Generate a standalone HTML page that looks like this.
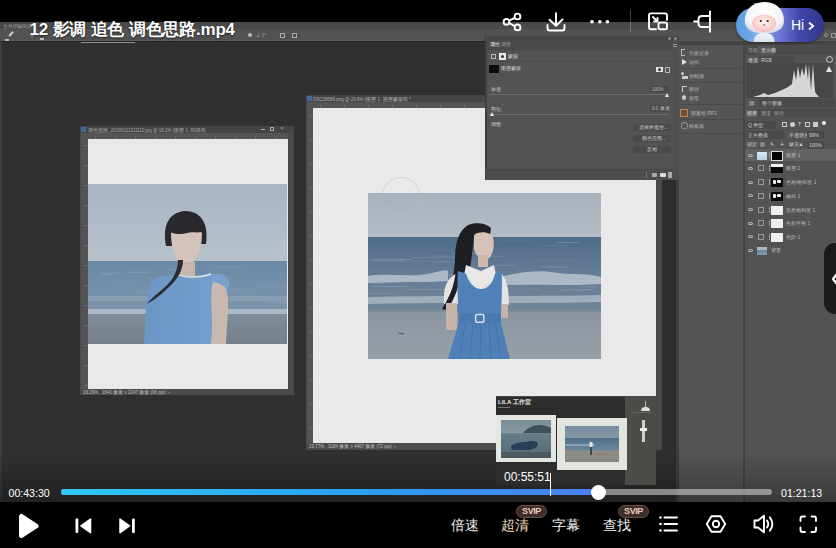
<!DOCTYPE html>
<html><head><meta charset="utf-8">
<style>
*{margin:0;padding:0;box-sizing:border-box}
html,body{width:836px;height:548px;overflow:hidden;background:#303030;font-family:"Liberation Sans",sans-serif;position:relative}
.a{position:absolute}
.t{position:absolute;font-size:5px;line-height:5px;color:#c8c8c8;white-space:nowrap}
.sep{position:absolute;height:1px;background:#474747}
</style></head><body>
<!-- ===== PHOTOSHOP FRAME ===== -->
<!-- menu + options bar -->
<div class="a" style="left:0;top:22px;width:836px;height:7px;background:#494949"></div>
<div class="a" style="left:0;top:29px;width:836px;height:12px;background:#525252"></div>
<div class="a" style="left:0;top:40px;width:836px;height:1px;background:#5a5a5a"></div>
<div class="a" style="left:0;top:41px;width:836px;height:1px;background:#262626"></div>
<div class="a" style="left:0;top:42px;width:2px;height:460px;background:#3c3c3c"></div>

<!-- LEFT DOC WINDOW -->
<div class="a" style="left:80px;top:126px;width:214px;height:269px;background:#4b4b4b"></div>
<div class="a" style="left:80px;top:126px;width:214px;height:7px;background:#444"></div>
<div class="a" style="left:81px;top:127px;width:5px;height:5px;background:#3d6aa0"></div>
<div class="a" style="left:81px;top:133px;width:7px;height:256px;background:#545454"></div>
<div class="a" style="left:88px;top:133px;width:200px;height:6px;background:#545454"></div>
<div class="a" style="left:88px;top:139px;width:200px;height:250px;background:#e9e9ea"></div>

<!-- RIGHT DOC WINDOW -->
<div class="a" style="left:306px;top:95px;width:356px;height:355px;background:#4b4b4b"></div>
<div class="a" style="left:306px;top:95px;width:356px;height:7px;background:#444"></div>
<div class="a" style="left:307px;top:96px;width:5px;height:5px;background:#3d6aa0"></div>
<div class="a" style="left:307px;top:102px;width:6px;height:341px;background:#545454"></div>
<div class="a" style="left:313px;top:102px;width:343px;height:6px;background:#545454"></div>
<div class="a" style="left:313px;top:108px;width:343px;height:335px;background:#e9e9ea"></div>


<!-- PS menu text & option icons -->
<div class="t" style="left:3px;top:24px;color:#9a9a9a;font-size:4.5px">文件(F)</div>
<div class="t" style="left:17px;top:24px;color:#9a9a9a;font-size:4.5px">编辑(E)</div>
<div class="a" style="left:8px;top:33px;width:6px;height:1.5px;background:#cfcfcf;transform:rotate(-50deg)"></div>
<div class="a" style="left:5px;top:39px;width:4px;height:2px;background:#bbb"></div>
<div class="a" style="left:30px;top:33px;width:4px;height:4px;border-radius:50%;background:#8a8a8a"></div>
<div class="a" style="left:40px;top:38px;width:4px;height:2px;background:#bbb"></div>
<div class="a" style="left:248px;top:33px;width:4px;height:4px;border-radius:50%;background:#bbb"></div>
<div class="t" style="left:256px;top:33px;color:#9a9a9a;font-size:5px">∠ 0°</div>
<div class="a" style="left:280px;top:33px;width:5px;height:5px;border:1px solid #aaa"></div>
<div class="a" style="left:292px;top:33px;width:5px;height:5px;border:1px solid #aaa"></div>
<div class="a" style="left:81px;top:42px;width:54px;height:1px;background:#8a8a8a"></div>

<!-- doc window titles -->
<div class="t" style="left:88px;top:127.5px;color:#a8a8a8;font-size:4.5px">调色思路_20190121211110.jpg @ 16.2% (图层 1, RGB/8)</div>
<div class="a" style="left:261px;top:129px;width:4px;height:1px;background:#aaa"></div>
<div class="a" style="left:270px;top:127px;width:4px;height:4px;border:1px solid #aaa"></div>
<div class="t" style="left:280px;top:126px;color:#aaa;font-size:6px">×</div>
<div class="t" style="left:313px;top:97px;color:#b0b0b0;font-size:4.5px">DSC08586.png @ 29.8% (图层 1, 图层蒙版/8) *</div>
<!-- status bars -->
<div class="t" style="left:83px;top:390px;color:#bdbdbd;font-size:4.5px">16.29% &nbsp; 1641 像素 x 2247 像素 (96 ppi) &nbsp;›</div>
<div class="t" style="left:309px;top:444px;color:#bdbdbd;font-size:4.5px">29.77% &nbsp; 3184 像素 x 4467 像素 (72 ppi) &nbsp;›</div>

<div class="a" style="left:320px;top:105px;width:1px;height:3px;background:#707070"></div><div class="a" style="left:344px;top:105px;width:1px;height:3px;background:#707070"></div><div class="a" style="left:368px;top:105px;width:1px;height:3px;background:#707070"></div><div class="a" style="left:392px;top:105px;width:1px;height:3px;background:#707070"></div><div class="a" style="left:416px;top:105px;width:1px;height:3px;background:#707070"></div><div class="a" style="left:440px;top:105px;width:1px;height:3px;background:#707070"></div><div class="a" style="left:464px;top:105px;width:1px;height:3px;background:#707070"></div><div class="a" style="left:488px;top:105px;width:1px;height:3px;background:#707070"></div><div class="a" style="left:512px;top:105px;width:1px;height:3px;background:#707070"></div><div class="a" style="left:536px;top:105px;width:1px;height:3px;background:#707070"></div><div class="a" style="left:560px;top:105px;width:1px;height:3px;background:#707070"></div><div class="a" style="left:584px;top:105px;width:1px;height:3px;background:#707070"></div><div class="a" style="left:608px;top:105px;width:1px;height:3px;background:#707070"></div><div class="a" style="left:632px;top:105px;width:1px;height:3px;background:#707070"></div><div class="a" style="left:310px;top:115px;width:3px;height:1px;background:#707070"></div><div class="a" style="left:310px;top:139px;width:3px;height:1px;background:#707070"></div><div class="a" style="left:310px;top:163px;width:3px;height:1px;background:#707070"></div><div class="a" style="left:310px;top:187px;width:3px;height:1px;background:#707070"></div><div class="a" style="left:310px;top:211px;width:3px;height:1px;background:#707070"></div><div class="a" style="left:310px;top:235px;width:3px;height:1px;background:#707070"></div><div class="a" style="left:310px;top:259px;width:3px;height:1px;background:#707070"></div><div class="a" style="left:310px;top:283px;width:3px;height:1px;background:#707070"></div><div class="a" style="left:310px;top:307px;width:3px;height:1px;background:#707070"></div><div class="a" style="left:310px;top:331px;width:3px;height:1px;background:#707070"></div><div class="a" style="left:310px;top:355px;width:3px;height:1px;background:#707070"></div><div class="a" style="left:310px;top:379px;width:3px;height:1px;background:#707070"></div><div class="a" style="left:310px;top:403px;width:3px;height:1px;background:#707070"></div><div class="a" style="left:310px;top:427px;width:3px;height:1px;background:#707070"></div><div class="a" style="left:95px;top:136px;width:1px;height:3px;background:#707070"></div><div class="a" style="left:115px;top:136px;width:1px;height:3px;background:#707070"></div><div class="a" style="left:135px;top:136px;width:1px;height:3px;background:#707070"></div><div class="a" style="left:155px;top:136px;width:1px;height:3px;background:#707070"></div><div class="a" style="left:175px;top:136px;width:1px;height:3px;background:#707070"></div><div class="a" style="left:195px;top:136px;width:1px;height:3px;background:#707070"></div><div class="a" style="left:215px;top:136px;width:1px;height:3px;background:#707070"></div><div class="a" style="left:235px;top:136px;width:1px;height:3px;background:#707070"></div><div class="a" style="left:255px;top:136px;width:1px;height:3px;background:#707070"></div><div class="a" style="left:275px;top:136px;width:1px;height:3px;background:#707070"></div><div class="a" style="left:85px;top:145px;width:3px;height:1px;background:#707070"></div><div class="a" style="left:85px;top:165px;width:3px;height:1px;background:#707070"></div><div class="a" style="left:85px;top:185px;width:3px;height:1px;background:#707070"></div><div class="a" style="left:85px;top:205px;width:3px;height:1px;background:#707070"></div><div class="a" style="left:85px;top:225px;width:3px;height:1px;background:#707070"></div><div class="a" style="left:85px;top:245px;width:3px;height:1px;background:#707070"></div><div class="a" style="left:85px;top:265px;width:3px;height:1px;background:#707070"></div><div class="a" style="left:85px;top:285px;width:3px;height:1px;background:#707070"></div><div class="a" style="left:85px;top:305px;width:3px;height:1px;background:#707070"></div><div class="a" style="left:85px;top:325px;width:3px;height:1px;background:#707070"></div><div class="a" style="left:85px;top:345px;width:3px;height:1px;background:#707070"></div><div class="a" style="left:85px;top:365px;width:3px;height:1px;background:#707070"></div><div class="a" style="left:85px;top:385px;width:3px;height:1px;background:#707070"></div>
<div class="a" style="left:824px;top:33px;width:4px;height:4px;border-radius:50%;border:1px solid #999"></div><div class="a" style="left:831px;top:33px;width:5px;height:5px;border:1px solid #999"></div>
<!-- PROPERTIES PANEL -->
<div class="a" style="left:486px;top:36px;width:193px;height:144px;background:#535353"></div>
<div class="a" style="left:485px;top:36px;width:2px;height:144px;background:#3e3e3e"></div>
<div class="a" style="left:486px;top:36px;width:193px;height:4px;background:#484848"></div>
<div class="a" style="left:486px;top:40px;width:187px;height:10px;background:#4a4a4a"></div>
<div class="a" style="left:673px;top:40px;width:6px;height:129px;background:#4f4f4f"></div>
<div class="a" style="left:486px;top:169px;width:193px;height:11px;background:#4d4d4d"></div>


<!-- properties panel contents -->
<div class="a" style="left:668px;top:37px;width:3px;height:3px;border-radius:50%;background:#8a8a8a"></div>
<div class="a" style="left:674px;top:37px;width:3px;height:3px;border-radius:50%;background:#8a8a8a"></div>
<div class="t" style="left:490px;top:42px;color:#e0e0e0">属性</div>
<div class="t" style="left:501px;top:42px;color:#9a9a9a">调整</div>
<div class="a" style="left:673px;top:44px;width:4px;height:3px;border-top:1px solid #999;border-bottom:1px solid #999"></div>
<div class="sep" style="left:486px;top:50px;width:187px;background:#4d4d4d"></div>
<div class="a" style="left:491px;top:54px;width:5px;height:5px;border:1px solid #bbb"></div>
<div class="a" style="left:499px;top:53px;width:7px;height:7px;background:#e8e8e8"></div>
<div class="a" style="left:501px;top:55px;width:3px;height:3px;border-radius:50%;background:#333"></div>
<div class="t" style="left:508px;top:54px;color:#cfcfcf">蒙版</div>
<div class="sep" style="left:486px;top:61px;width:187px;background:#4d4d4d"></div>
<div class="a" style="left:489px;top:65px;width:10px;height:8px;background:#0c0c0c"></div>
<div class="t" style="left:501px;top:66px;color:#cfcfcf">图层蒙版</div>
<div class="a" style="left:656px;top:67px;width:7px;height:5px;background:#e4e4e4"></div>
<div class="a" style="left:658px;top:68px;width:3px;height:3px;border-radius:50%;background:#333"></div>
<div class="a" style="left:665px;top:67px;width:5px;height:6px;border:1px solid #bbb"></div>
<div class="sep" style="left:486px;top:77px;width:187px;background:#4f4f4f"></div>
<div class="t" style="left:491px;top:87px;color:#cfcfcf">浓度:</div>
<div class="a" style="left:650px;top:86px;width:19px;height:7px;background:#4a4a4a"></div>
<div class="t" style="left:652px;top:87px;color:#bdbdbd;font-size:4.5px">100%</div>
<div class="a" style="left:489px;top:94px;width:180px;height:1px;background:#6e6e6e"></div>
<div class="a" style="left:665px;top:93px;width:0;height:0;border-left:2.5px solid transparent;border-right:2.5px solid transparent;border-bottom:4px solid #e6e6e6"></div>
<div class="t" style="left:491px;top:107px;color:#cfcfcf">羽化:</div>
<div class="a" style="left:650px;top:105px;width:19px;height:7px;background:#4a4a4a"></div>
<div class="t" style="left:652px;top:106px;color:#bdbdbd;font-size:4.5px">0.0 像素</div>
<div class="a" style="left:489px;top:114px;width:180px;height:1px;background:#6e6e6e"></div>
<div class="a" style="left:490px;top:112px;width:0;height:0;border-left:2.5px solid transparent;border-right:2.5px solid transparent;border-bottom:4px solid #e6e6e6"></div>
<div class="t" style="left:491px;top:122px;color:#cfcfcf">调整:</div>
<div class="a" style="left:633px;top:124px;width:38px;height:7px;background:#4a4a4a"></div>
<div class="t" style="left:639px;top:125px;color:#cfcfcf;font-size:4.5px">选择并遮住...</div>
<div class="a" style="left:633px;top:135px;width:38px;height:7px;background:#4a4a4a"></div>
<div class="t" style="left:642px;top:136px;color:#cfcfcf;font-size:4.5px">颜色范围...</div>
<div class="a" style="left:633px;top:146px;width:38px;height:7px;background:#4a4a4a"></div>
<div class="t" style="left:647px;top:147px;color:#cfcfcf;font-size:4.5px">反相</div>
<div class="sep" style="left:486px;top:169px;width:193px;background:#474747"></div>
<div class="a" style="left:646px;top:172px;width:1px;height:6px;background:#777"></div>
<div class="a" style="left:652px;top:173px;width:5px;height:4px;background:#aaa;border-radius:1px"></div>
<div class="a" style="left:660px;top:173px;width:6px;height:4px;background:#ddd;border-radius:1px"></div>
<div class="a" style="left:668px;top:172px;width:4px;height:6px;background:#aaa"></div>

<!-- RIGHT DOCK -->
<div class="a" style="left:662px;top:180px;width:14px;height:322px;background:#2e2e2e"></div>
<div class="a" style="left:676px;top:180px;width:3px;height:322px;background:#3e3e3e"></div>
<div class="a" style="left:679px;top:41px;width:65px;height:461px;background:#555"></div>
<div class="a" style="left:679px;top:41px;width:157px;height:4px;background:#444"></div>
<div class="a" style="left:743px;top:45px;width:2px;height:457px;background:#444"></div>
<div class="a" style="left:745px;top:45px;width:91px;height:457px;background:#535353"></div>
<!-- icon column -->
<div class="a" style="left:681px;top:49px;width:4px;height:7px;border:1px solid #bbb;border-right:none"></div>
<div class="t" style="left:689px;top:51px;color:#b8b8b8">历史记录</div>
<div class="a" style="left:682px;top:59px;width:0;height:0;border-top:3px solid transparent;border-bottom:3px solid transparent;border-left:5px solid #e0e0e0"></div>
<div class="t" style="left:689px;top:60px;color:#b8b8b8">动作</div>
<div class="sep" style="left:679px;top:68px;width:64px;background:#4a4a4a"></div>
<div class="a" style="left:681px;top:72px;width:3px;height:3px;border-radius:50%;background:#ccc"></div><div class="a" style="left:682px;top:76px;width:6px;height:3px;background:#ccc"></div>
<div class="t" style="left:689px;top:74px;color:#b8b8b8">仿制源</div>
<div class="sep" style="left:679px;top:82px;width:64px;background:#4a4a4a"></div>
<div class="a" style="left:682px;top:86px;width:5px;height:6px;border-left:1px solid #ccc;border-top:1px solid #ccc"></div>
<div class="t" style="left:689px;top:87px;color:#b8b8b8">路径</div>
<div class="a" style="left:682px;top:95px;width:4px;height:5px;border-radius:50%;background:#ccc"></div>
<div class="t" style="left:689px;top:96px;color:#b8b8b8">画笔</div>
<div class="sep" style="left:679px;top:104px;width:64px;background:#4a4a4a"></div>
<div class="a" style="left:680px;top:108.5px;width:8px;height:8px;background:#6e5040;border:1px solid #c8844c"></div>
<div class="t" style="left:691px;top:111px;color:#b8b8b8">图案组.PPJ</div>
<div class="sep" style="left:679px;top:119px;width:64px;background:#4a4a4a"></div>
<div class="a" style="left:681px;top:122px;width:7px;height:7px;border-radius:50%;border:1px dotted #ccc"></div>
<div class="t" style="left:689px;top:124px;color:#b8b8b8">样板器</div>
<div class="sep" style="left:679px;top:133px;width:64px;background:#4a4a4a"></div>

<!-- histogram panel -->
<div class="a" style="left:745px;top:45px;width:91px;height:10px;background:#4b4b4b"></div>
<div class="t" style="left:748px;top:48px;color:#a0a0a0">导航器</div>
<div class="a" style="left:759px;top:46px;width:16px;height:9px;background:#575757"></div>
<div class="t" style="left:761px;top:48px;color:#e0e0e0">直方图</div>
<div class="t" style="left:748px;top:58px;color:#cfcfcf">通道:</div>
<div class="a" style="left:759px;top:56px;width:36px;height:7px;background:#4a4a4a"></div>
<div class="t" style="left:761px;top:58px;color:#cfcfcf">RGB</div>
<div class="a" style="left:826px;top:56px;width:7px;height:7px;border-radius:50%;border:1px solid #ccc"></div>
<div class="a" style="left:746px;top:63px;width:87px;height:35px;background:#474747"></div>
<svg class="a" style="left:746px;top:63px" width="87" height="35" viewBox="746 63 87 35">
 <path d="M753 97 L760 95 L764 93 L768 95 L775 93 L782 90 L788 87 L792 84 L794 70 L796 80 L798 66 L800 78 L802 68 L804 76 L806 64 L808 80 L809 64 L811 90 L813 64 L815 92 L818 96 L819 97 Z" fill="#d6d6d6"/>
</svg>
<div class="a" style="left:826px;top:66px;width:0;height:0;border-left:3.5px solid transparent;border-right:3.5px solid transparent;border-bottom:6px solid #e6e6e6"></div>
<div class="t" style="left:749px;top:101px;color:#cfcfcf">源:</div>
<div class="a" style="left:759px;top:99px;width:76px;height:8px;background:#4a4a4a"></div>
<div class="t" style="left:762px;top:101px;color:#cfcfcf">整个图像</div>

<!-- layers panel -->
<div class="a" style="left:745px;top:109px;width:91px;height:8px;background:#4b4b4b"></div>
<div class="a" style="left:745px;top:109px;width:12px;height:8px;background:#575757"></div>
<div class="t" style="left:747px;top:111px;color:#e0e0e0">图层</div>
<div class="t" style="left:761px;top:111px;color:#a0a0a0">通道</div>
<div class="t" style="left:774px;top:111px;color:#a0a0a0">路径</div>
<div class="a" style="left:746px;top:121px;width:30px;height:8px;background:#4a4a4a"></div>
<div class="t" style="left:748px;top:123px;color:#cfcfcf">Q 类型</div>
<div class="a" style="left:782px;top:122px;width:5px;height:5px;border:1px solid #ccc"></div>
<div class="a" style="left:790px;top:122px;width:5px;height:5px;border-radius:50%;background:#ccc"></div>
<div class="t" style="left:798px;top:122px;color:#ddd">T</div>
<div class="a" style="left:805px;top:122px;width:5px;height:5px;border:1px dashed #ccc"></div>
<div class="a" style="left:813px;top:122px;width:5px;height:5px;background:#ccc"></div>
<div class="a" style="left:822px;top:121px;width:4px;height:4px;border-radius:50%;background:#eee"></div>
<div class="a" style="left:746px;top:131px;width:38px;height:8px;background:#4a4a4a"></div>
<div class="t" style="left:748px;top:133px;color:#cfcfcf">正片叠底</div>
<div class="t" style="left:789px;top:133px;color:#cfcfcf">不透明度:</div>
<div class="a" style="left:807px;top:131px;width:17px;height:8px;background:#4a4a4a"></div>
<div class="t" style="left:809px;top:133px;color:#cfcfcf">99%</div>
<div class="t" style="left:747px;top:142px;color:#cfcfcf">锁定:</div>
<div class="t" style="left:760px;top:142px;color:#ddd;letter-spacing:2px">▧ ✎ ✛ ⊔ ▲</div>
<div class="t" style="left:789px;top:142px;color:#cfcfcf">填充:</div>
<div class="a" style="left:807px;top:141px;width:17px;height:8px;background:#4a4a4a"></div>
<div class="t" style="left:809px;top:143px;color:#cfcfcf">100%</div>
<div class="a" style="left:745px;top:149px;width:91px;height:12px;background:#626262"></div>
<div class="a" style="left:748px;top:153.5px;width:5px;height:3px;border-radius:50%;border:1px solid #bbb"></div>
<div class="sep" style="left:745px;top:161.5px;width:91px;background:#505050"></div>
<div class="a" style="left:757px;top:151.5px;width:10px;height:8px;background:linear-gradient(#dbe8f2,#b9cfe2)"></div>
<div class="a" style="left:769px;top:152px;width:1px;height:6px;background:#999"></div>
<div class="a" style="left:771px;top:150.5px;width:12px;height:10px;background:#050505;border:1px solid #ddd"></div>
<div class="t" style="left:786px;top:153px;color:#bdbdbd">图层 1</div>
<div class="a" style="left:748px;top:166.5px;width:5px;height:3px;border-radius:50%;border:1px solid #bbb"></div>
<div class="sep" style="left:745px;top:174.5px;width:91px;background:#505050"></div>
<div class="a" style="left:758px;top:165px;width:6px;height:6px;border:1px solid #999"></div>
<div class="a" style="left:769px;top:165px;width:1px;height:6px;background:#999"></div>
<div class="a" style="left:771px;top:164px;width:12px;height:9px;background:linear-gradient(#f0f0f0 30%,#080808 30%)"></div>
<div class="t" style="left:786px;top:166px;color:#bdbdbd">图层 2</div>
<div class="a" style="left:748px;top:180.5px;width:5px;height:3px;border-radius:50%;border:1px solid #bbb"></div>
<div class="sep" style="left:745px;top:188.5px;width:91px;background:#505050"></div>
<div class="a" style="left:758px;top:179px;width:6px;height:6px;border:1px solid #999"></div>
<div class="a" style="left:769px;top:179px;width:1px;height:6px;background:#999"></div>
<div class="a" style="left:771px;top:178px;width:12px;height:9px;background:#0a0a0a"></div>
<div class="a" style="left:773px;top:180px;width:3px;height:4px;background:#eee;border-radius:1px"></div>
<div class="a" style="left:777px;top:180px;width:4px;height:3px;background:#eee;border-radius:1px"></div>
<div class="t" style="left:786px;top:180px;color:#bdbdbd">色相/饱和度 1</div>
<div class="a" style="left:748px;top:194.0px;width:5px;height:3px;border-radius:50%;border:1px solid #bbb"></div>
<div class="sep" style="left:745px;top:202.0px;width:91px;background:#505050"></div>
<div class="a" style="left:758px;top:192.5px;width:6px;height:6px;border:1px solid #999"></div>
<div class="a" style="left:769px;top:192.5px;width:1px;height:6px;background:#999"></div>
<div class="a" style="left:771px;top:191.5px;width:12px;height:9px;background:#0a0a0a"></div>
<div class="a" style="left:773px;top:193.5px;width:3px;height:4px;background:#eee;border-radius:1px"></div>
<div class="a" style="left:777px;top:193.5px;width:4px;height:3px;background:#eee;border-radius:1px"></div>
<div class="t" style="left:786px;top:193.5px;color:#bdbdbd">曲线 1</div>
<div class="a" style="left:748px;top:208.0px;width:5px;height:3px;border-radius:50%;border:1px solid #bbb"></div>
<div class="sep" style="left:745px;top:216.0px;width:91px;background:#505050"></div>
<div class="a" style="left:758px;top:206.5px;width:6px;height:6px;border:1px solid #999"></div>
<div class="a" style="left:769px;top:206.5px;width:1px;height:6px;background:#999"></div>
<div class="a" style="left:771px;top:205.5px;width:12px;height:9px;background:#efefef"></div>
<div class="t" style="left:786px;top:207.5px;color:#bdbdbd">自然饱和度 1</div>
<div class="a" style="left:748px;top:221.5px;width:5px;height:3px;border-radius:50%;border:1px solid #bbb"></div>
<div class="sep" style="left:745px;top:229.5px;width:91px;background:#505050"></div>
<div class="a" style="left:758px;top:220px;width:6px;height:6px;border:1px solid #999"></div>
<div class="a" style="left:769px;top:220px;width:1px;height:6px;background:#999"></div>
<div class="a" style="left:771px;top:219px;width:12px;height:9px;background:#efefef"></div>
<div class="t" style="left:786px;top:221px;color:#bdbdbd">色彩平衡 1</div>
<div class="a" style="left:748px;top:235.0px;width:5px;height:3px;border-radius:50%;border:1px solid #bbb"></div>
<div class="sep" style="left:745px;top:243.0px;width:91px;background:#505050"></div>
<div class="a" style="left:758px;top:233.5px;width:6px;height:6px;border:1px solid #999"></div>
<div class="a" style="left:769px;top:233.5px;width:1px;height:6px;background:#999"></div>
<div class="a" style="left:771px;top:232.5px;width:12px;height:9px;background:#efefef"></div>
<div class="t" style="left:786px;top:234.5px;color:#bdbdbd">色阶 1</div>
<div class="a" style="left:748px;top:248.5px;width:5px;height:3px;border-radius:50%;border:1px solid #bbb"></div>
<div class="sep" style="left:745px;top:256.5px;width:91px;background:#505050"></div>
<div class="a" style="left:757px;top:246.5px;width:10px;height:8px;background:linear-gradient(#a9b9c8 40%,#6a87a4 40%,#8899aa)"></div>
<div class="t" style="left:771px;top:248px;color:#bdbdbd">背景</div>

<!-- PHOTO 1 (left) 88,184 199x160 -->
<svg class="a" style="left:88px;top:184px" width="199" height="160" viewBox="0 0 199 160">
 <defs>
  <linearGradient id="sk1" x1="0" y1="0" x2="0" y2="1"><stop offset="0" stop-color="#a6b4c4"/><stop offset="1" stop-color="#b8c2cc"/></linearGradient>
  <linearGradient id="sa1" x1="0" y1="0" x2="0" y2="1"><stop offset="0" stop-color="#7f8d9a"/><stop offset="1" stop-color="#74808a"/></linearGradient>
  <linearGradient id="se1" x1="0" y1="0" x2="0" y2="1"><stop offset="0" stop-color="#6b88a6"/><stop offset="0.5" stop-color="#7490ab"/><stop offset="1" stop-color="#7e95aa"/></linearGradient>
  <linearGradient id="dr1" x1="0" y1="0" x2="1" y2="0"><stop offset="0" stop-color="#6b96c6"/><stop offset="1" stop-color="#76a0cc"/></linearGradient>
 </defs>
 <rect width="199" height="78" fill="url(#sk1)"/>
 <rect y="77" width="199" height="54" fill="url(#se1)"/>
 <rect x="20.2" y="99.4" width="29.5" height="1" fill="#e3eaf2" opacity="0.07"/><rect x="63.1" y="112.2" width="11.7" height="1" fill="#e3eaf2" opacity="0.12"/><rect x="76.7" y="82.2" width="12.1" height="1" fill="#e3eaf2" opacity="0.07"/><rect x="155.4" y="105.5" width="13.7" height="1" fill="#e3eaf2" opacity="0.09"/><rect x="179.5" y="117.6" width="27.3" height="1" fill="#e3eaf2" opacity="0.11"/><rect x="-0.7" y="138.6" width="35.8" height="1" fill="#e3eaf2" opacity="0.09"/><rect x="13.6" y="88.7" width="19.3" height="1" fill="#e3eaf2" opacity="0.16"/><rect x="106.3" y="90.8" width="29.2" height="1" fill="#e3eaf2" opacity="0.10"/><rect x="2.6" y="112.9" width="11.8" height="1" fill="#e3eaf2" opacity="0.08"/><rect x="75.5" y="120.8" width="19.4" height="1" fill="#e3eaf2" opacity="0.13"/><rect x="50.0" y="107.2" width="33.8" height="1" fill="#e3eaf2" opacity="0.14"/><rect x="104.9" y="94.6" width="25.8" height="1" fill="#e3eaf2" opacity="0.17"/><rect x="47.6" y="123.8" width="39.4" height="1" fill="#e3eaf2" opacity="0.07"/><rect x="141.4" y="105.1" width="14.6" height="1" fill="#e3eaf2" opacity="0.12"/><rect x="123.6" y="82.4" width="32.9" height="1" fill="#e3eaf2" opacity="0.13"/><rect x="52.7" y="132.5" width="30.9" height="1" fill="#e3eaf2" opacity="0.13"/><rect x="81.2" y="114.8" width="35.2" height="1" fill="#e3eaf2" opacity="0.17"/><rect x="122.8" y="108.4" width="11.8" height="1" fill="#e3eaf2" opacity="0.14"/><rect x="188.6" y="118.8" width="34.7" height="1" fill="#e3eaf2" opacity="0.09"/><rect x="123.7" y="103.1" width="10.7" height="1" fill="#e3eaf2" opacity="0.12"/><rect x="13.4" y="90.1" width="11.8" height="1" fill="#e3eaf2" opacity="0.15"/><rect x="39.5" y="87.8" width="21.7" height="1" fill="#e3eaf2" opacity="0.16"/><rect x="79.8" y="84.8" width="26.5" height="1" fill="#e3eaf2" opacity="0.17"/><rect x="162.8" y="129.2" width="18.4" height="1" fill="#e3eaf2" opacity="0.11"/><rect x="166.8" y="101.5" width="38.7" height="1" fill="#e3eaf2" opacity="0.08"/>
 
 <rect y="112" width="199" height="5" fill="#8aa0b4" opacity="0.8"/>
 <rect y="125" width="199" height="5" fill="#aebbc7" opacity="0.9"/>
 <rect y="130" width="199" height="30" fill="url(#sa1)"/>
 <!-- hair -->
 <path d="M78 62 C74 40 82 28 97 27 C112 27 121 38 118 60 L112 60 L111 48 L85 48 L84 62 Z" fill="#29282c"/>
 <!-- face -->
 <path d="M83 48 C84 42 90 40 98 40 C106 40 113 42 114 50 C114 66 108 80 98 82 C88 80 83 66 83 48 Z" fill="#d3c3ba"/>
 <path d="M81 48 C83 34 112 33 116 47 C110 50 105 47 99 49 C93 51 87 50 81 48 Z" fill="#29282c"/>
 <!-- neck -->
 <rect x="92" y="78" width="15" height="14" fill="#c8b6ac"/>
 <!-- dress -->
 <path d="M56 160 L58 124 C60 106 62 97 68 94 L89 90 C95 94 112 94 123 90 L138 92 C143 97 142 104 136 114 L128 160 Z" fill="url(#dr1)"/>
 <path d="M89 90 C95 94 112 94 123 90" stroke="#e3e6ea" stroke-width="1.5" fill="none"/>
 <path d="M90 76 C90 90 82 100 70 109 C65 113 61 117 59 120 C64 117 72 112 80 104 C90 95 95 86 95 76 Z" fill="#2c2b2f"/>
 <!-- right arm -->
 <path d="M125 98 C135 94 141 104 140 124 L138 160 L123 160 C126 134 121 112 125 98 Z" fill="#c9b8b0"/>
 <path d="M123 91 C132 88 142 90 139 104 C133 100 128 98 124 98 Z" fill="#78a1cd"/>
</svg>

<!-- PHOTO 2 (right) 368,193 233x166 -->
<svg class="a" style="left:368px;top:193px" width="233" height="166" viewBox="0 0 233 166">
 <defs>
  <linearGradient id="sk2" x1="0" y1="0" x2="0" y2="1"><stop offset="0" stop-color="#a8b1bb"/><stop offset="1" stop-color="#b4bcc5"/></linearGradient>
  <linearGradient id="se2" x1="0" y1="0" x2="0" y2="1"><stop offset="0" stop-color="#4f6b88"/><stop offset="0.4" stop-color="#617a94"/><stop offset="1" stop-color="#71869b"/></linearGradient>
  <linearGradient id="sa2" x1="0" y1="0" x2="0" y2="1"><stop offset="0" stop-color="#8c96a1"/><stop offset="1" stop-color="#989fa7"/></linearGradient>
 </defs>
 <rect width="233" height="45" fill="url(#sk2)"/>
 <rect y="44" width="233" height="75" fill="url(#se2)"/>
 <rect x="115.2" y="62.7" width="22.9" height="1" fill="#dfe6ee" opacity="0.16"/><rect x="5.1" y="89.8" width="10.5" height="1" fill="#dfe6ee" opacity="0.20"/><rect x="43.9" y="64.2" width="44.8" height="1" fill="#dfe6ee" opacity="0.15"/><rect x="99.6" y="104.6" width="32.4" height="1" fill="#dfe6ee" opacity="0.10"/><rect x="189.7" y="90.4" width="28.3" height="1" fill="#dfe6ee" opacity="0.18"/><rect x="4.7" y="93.0" width="36.5" height="1" fill="#dfe6ee" opacity="0.16"/><rect x="-2.9" y="67.1" width="40.3" height="1" fill="#dfe6ee" opacity="0.15"/><rect x="192.1" y="96.3" width="35.0" height="1" fill="#dfe6ee" opacity="0.21"/><rect x="174.2" y="73.6" width="25.6" height="1" fill="#dfe6ee" opacity="0.21"/><rect x="12.4" y="107.5" width="14.8" height="1" fill="#dfe6ee" opacity="0.11"/><rect x="90.3" y="113.6" width="31.9" height="1" fill="#dfe6ee" opacity="0.12"/><rect x="78.7" y="81.5" width="22.3" height="1" fill="#dfe6ee" opacity="0.16"/><rect x="198.0" y="86.9" width="33.9" height="1" fill="#dfe6ee" opacity="0.21"/><rect x="217.9" y="105.9" width="33.5" height="1" fill="#dfe6ee" opacity="0.10"/><rect x="211.9" y="106.2" width="41.7" height="1" fill="#dfe6ee" opacity="0.16"/><rect x="38.6" y="96.0" width="39.1" height="1" fill="#dfe6ee" opacity="0.16"/><rect x="4.6" y="65.9" width="39.9" height="1" fill="#dfe6ee" opacity="0.22"/><rect x="174.1" y="52.2" width="24.4" height="1" fill="#dfe6ee" opacity="0.10"/><rect x="166.8" y="66.6" width="40.5" height="1" fill="#dfe6ee" opacity="0.09"/><rect x="0.3" y="89.0" width="35.1" height="1" fill="#dfe6ee" opacity="0.13"/><rect x="215.5" y="107.7" width="27.7" height="1" fill="#dfe6ee" opacity="0.22"/><rect x="7.7" y="67.7" width="31.0" height="1" fill="#dfe6ee" opacity="0.08"/><rect x="83.8" y="59.8" width="31.4" height="1" fill="#dfe6ee" opacity="0.10"/><rect x="189.6" y="49.0" width="21.0" height="1" fill="#dfe6ee" opacity="0.21"/><rect x="76.9" y="108.8" width="26.1" height="1" fill="#dfe6ee" opacity="0.15"/><rect x="127.0" y="91.1" width="29.6" height="1" fill="#dfe6ee" opacity="0.17"/><rect x="106.6" y="111.8" width="25.1" height="1" fill="#dfe6ee" opacity="0.18"/><rect x="59.2" y="62.6" width="44.2" height="1" fill="#dfe6ee" opacity="0.15"/><rect x="-7.4" y="84.4" width="24.5" height="1" fill="#dfe6ee" opacity="0.16"/><rect x="131.6" y="47.4" width="32.1" height="1" fill="#dfe6ee" opacity="0.09"/><rect x="97.2" y="89.9" width="33.8" height="1" fill="#dfe6ee" opacity="0.13"/><rect x="159.7" y="95.5" width="10.8" height="1" fill="#dfe6ee" opacity="0.09"/><rect x="211.6" y="93.3" width="18.8" height="1" fill="#dfe6ee" opacity="0.14"/><rect x="63.6" y="87.5" width="22.7" height="1" fill="#dfe6ee" opacity="0.12"/><rect x="127.0" y="71.8" width="20.5" height="1" fill="#dfe6ee" opacity="0.13"/><rect x="-3.8" y="100.1" width="29.9" height="1" fill="#dfe6ee" opacity="0.18"/><rect x="41.2" y="67.7" width="38.1" height="1" fill="#dfe6ee" opacity="0.11"/><rect x="90.1" y="59.1" width="34.4" height="1" fill="#dfe6ee" opacity="0.09"/><rect x="66.8" y="68.5" width="39.2" height="1" fill="#dfe6ee" opacity="0.14"/><rect x="28.9" y="105.9" width="21.8" height="1" fill="#dfe6ee" opacity="0.17"/>
 <path d="M0 83 C20 80 40 84 60 81 C70 79 78 76 80 78 L80 88 C55 90 30 88 0 90 Z" fill="#c3ccd6" opacity="0.75"/>
 <path d="M130 84 C150 80 170 76 190 80 C205 82 220 80 233 84 L233 91 C200 93 170 91 130 92 Z" fill="#c3ccd6" opacity="0.75"/>
 <path d="M0 104 C60 102 160 104 233 102 L233 109 C160 111 60 109 0 111 Z" fill="#b3bfcb" opacity="0.7"/>
 <rect y="117" width="233" height="2" fill="#7e8a96"/>
 <rect y="119" width="233" height="47" fill="url(#sa2)"/>
 <path d="M118 160 L124 159 M30 140 L36 141" stroke="#555" stroke-width="1.2"/>
 <!-- hair -->
 <path d="M100 32 C108 29 118 30 123 35 L122 42 L106 44 L103 70 C99 86 92 100 82 113 L75 116 C80 102 86 88 87 66 C87 52 90 38 100 32 Z" fill="#1f1e22"/>
 <!-- face -->
 <path d="M106 42 C110 38 122 38 125 44 C127 54 125 62 120 66 C114 68 108 64 106 56 Z" fill="#d6c2b7"/>
 <rect x="110" y="62" width="10" height="12" fill="#cdb8ad"/>
 <!-- blouse -->
 <path d="M76 111 C75 94 79 84 90 80 L132 80 C139 84 141 96 141 112 L131 112 L127 96 L92 96 L91 111 Z" fill="#e4e3e3"/>
 <path d="M98 72 L113 78 L126 72 L128 82 L113 96 L96 82 Z" fill="#e8e7e6"/>
 <path d="M88 70 C88 88 84 100 74 116 L79 117 C88 104 92 92 93 72 Z" fill="#1f1e22"/>
 <!-- arms -->
 <rect x="78" y="110" width="11" height="27" fill="#c9b4a9"/>
 <rect x="131" y="111" width="9" height="14" fill="#c9b4a9"/>
 <!-- dress -->
 <path d="M89.8 78 L98 80.5 C101 90 106 96 113 96 C120 96 125 90 127 80.5 L133.6 78 C134.5 92 133.5 110 133 121 L90.5 121 C90 110 89 92 89.8 78 Z" fill="#5181b9"/>
 <path d="M90.5 130 L133 130 L142 166 L80 166 Z" fill="#4f7fb7"/>
 <rect x="90.5" y="120.6" width="42.5" height="9.6" fill="#4a79b1"/>
 <rect x="107.6" y="121.5" width="8.2" height="7.8" rx="1" fill="none" stroke="#d6dfea" stroke-width="1.5"/>
 <path d="M97 132 L91 166 M105 132 L102 166 M113 132 L112 166 M121 132 L123 166 M128 132 L133 166" stroke="#416ea5" stroke-width="0.8"/>
</svg>

<!-- brush cursor circle -->
<div class="a" style="left:382px;top:177px;width:38px;height:38px;border-radius:50%;border:1px solid rgba(190,190,190,0.5)"></div>


<!-- ===== VIDEO PLAYER OVERLAY ===== -->
<div class="a" style="left:0;top:0;width:836px;height:22px;background:#000"></div>
<div class="a" style="left:0;top:452px;width:836px;height:50px;background:linear-gradient(rgba(0,0,0,0),rgba(0,0,0,0.3))"></div>
<div class="a" style="left:0;top:502px;width:836px;height:46px;background:#000"></div>

<!-- title -->
<div class="a" style="left:29.5px;top:20px;font-size:17px;line-height:20px;font-weight:bold;color:#fff;white-space:nowrap;letter-spacing:-0.2px;text-shadow:0 0 1px rgba(0,0,0,0.8),0 1px 2px rgba(0,0,0,0.5)">12 影调 追色 调色思路.mp4</div>

<!-- top icons -->
<svg class="a" style="left:495px;top:5px" width="230" height="32" viewBox="495 5 230 32" fill="none" stroke="#fff" stroke-width="1.9" stroke-linecap="round" stroke-linejoin="round">
 <circle cx="506.5" cy="21.9" r="2.9"/><circle cx="517.5" cy="16.5" r="2.9"/><circle cx="517.5" cy="27.4" r="2.9"/>
 <path d="M509.2 20.6 L514.8 17.8 M509.2 23.2 L514.8 26.1"/>
 <path d="M556 13.2 V25.5 M549.5 19.8 L556 25.8 L562.5 19.5 M547.5 25 V28.2 Q547.5 30.5 549.8 30.5 H562.2 Q564.5 30.5 564.5 28.2 V25"/>
 <circle cx="592" cy="21.8" r="1.8" fill="#fff" stroke="none"/><circle cx="599.8" cy="21.8" r="1.8" fill="#fff" stroke="none"/><circle cx="607.4" cy="21.8" r="1.8" fill="#fff" stroke="none"/>
 <path d="M656 29.3 H651 Q649 29.3 649 27.3 V15.4 Q649 13.4 651 13.4 H665 Q667 13.4 667 15.4 V20" />
 <rect x="658.5" y="22.5" width="8.5" height="6.8" rx="1.8"/>
 <path d="M653 17 L657.5 21.5 M657.5 18 V21.5 H654"/>
 <path d="M710 11.5 V31.8 M710 16 H702 Q698.5 16 698.5 19.5 V23.5 Q698.5 27 702 27 H710 M694 21.5 H698.5"/>
</svg>
<div class="a" style="left:630px;top:10px;width:1px;height:22px;background:rgba(255,255,255,0.25)"></div>

<!-- Hi pill -->
<div class="a" style="left:736px;top:8px;width:88px;height:34px;border-radius:17px;background:linear-gradient(90deg,#5a9ae2 0%,#7eb0ea 25%,#6c78d6 50%,#4248ab 72%,#30368c 100%);box-shadow:0 1px 2px rgba(0,0,0,0.4)"></div>
<div class="a" style="left:791px;top:16.5px;font-size:14px;line-height:16px;color:#fff;white-space:nowrap">Hi</div>
<svg class="a" style="left:807px;top:20px" width="10" height="12" viewBox="0 0 10 12"><path d="M2.5 3 L6.3 6 L2.5 9" fill="none" stroke="#fff" stroke-width="1.7" stroke-linecap="round" stroke-linejoin="round"/></svg>
<!-- avatar -->
<svg class="a" style="left:740px;top:0" width="50" height="44" viewBox="0 0 50 44">
 <defs><radialGradient id="hel" cx="0.5" cy="0.35" r="0.65"><stop offset="0" stop-color="#ffffff"/><stop offset="0.75" stop-color="#f2f3f8"/><stop offset="1" stop-color="#d5dbe8"/></radialGradient>
 <radialGradient id="fc" cx="0.5" cy="0.45" r="0.6"><stop offset="0" stop-color="#fff4f0"/><stop offset="0.6" stop-color="#fad3cf"/><stop offset="1" stop-color="#f3b5b5"/></radialGradient>
 <linearGradient id="bd" x1="0" y1="0" x2="0" y2="1"><stop offset="0" stop-color="#f4f6fa"/><stop offset="1" stop-color="#d9e0ee"/></linearGradient></defs>
 <path d="M13.7 42 C13.7 36 18 32.5 24.2 32.5 C30.4 32.5 34.6 36 34.6 42 Z" fill="url(#bd)"/>
 <path d="M4.8 21 C4.8 9 13 2 24.4 2 C35.8 2 44 9 44 21 C44 29.5 36 33.5 24.4 33.5 C12.8 33.5 4.8 29.5 4.8 21 Z" fill="url(#hel)"/>
 <ellipse cx="24.2" cy="23.3" rx="12" ry="8.8" fill="url(#fc)"/>
 <circle cx="20.8" cy="21" r="1.1" fill="#1e1e1e"/><circle cx="27.7" cy="21" r="1.1" fill="#1e1e1e"/>
 <path d="M23 24.6 Q24.2 25.8 25.4 24.6" stroke="#333" stroke-width="0.7" fill="none"/>
</svg>

<!-- side tab -->
<div class="a" style="left:824px;top:243px;width:24px;height:71px;border-radius:11px;background:#1b1b1b"></div>
<svg class="a" style="left:830px;top:272px" width="8" height="14" viewBox="0 0 8 14"><path d="M6.5 2.5 L3 7 L6.5 11.5" fill="none" stroke="#fff" stroke-width="2.2" stroke-linecap="round" stroke-linejoin="round"/></svg>

<!-- thumbnail preview -->
<div class="a" style="left:496px;top:395.5px;width:160px;height:89.5px;background:#2c2c2c;border-top:1.5px solid #4a4a4a"></div>
<div class="a" style="left:625px;top:397px;width:31px;height:88px;background:#4b4b47"></div>
<div class="a" style="left:496px;top:397px;width:129px;height:18px;background:#2d2e2b"></div>
<div class="t" style="left:498px;top:399px;font-size:6px;line-height:6px;color:#e8e8e8;font-weight:bold">LILA 工作室</div>
<div class="a" style="left:498px;top:407px;width:12px;height:1px;background:#777"></div>
<div class="a" style="left:641px;top:407px;width:9px;height:4px;border-radius:4px 4px 0 0;background:#ddd"></div>
<div class="a" style="left:645px;top:401px;width:1px;height:6px;background:#bbb"></div>
<div class="a" style="left:642px;top:420px;width:3px;height:22px;background:#cfcfcf"></div>
<div class="a" style="left:640px;top:428px;width:7px;height:3px;background:#eee"></div>
<div class="a" style="left:631px;top:412px;width:20px;height:1px;background:#666"></div>
<div class="a" style="left:496px;top:415px;width:60px;height:47px;background:#e4e6e1"></div>
<svg class="a" style="left:501px;top:420px" width="50" height="38" viewBox="0 0 50 38">
 <defs><linearGradient id="tA" x1="0" y1="0" x2="0" y2="1"><stop offset="0" stop-color="#7a8e99"/><stop offset="0.33" stop-color="#8799a2"/><stop offset="0.36" stop-color="#667d88"/><stop offset="1" stop-color="#546a74"/></linearGradient></defs>
 <rect width="50" height="38" fill="url(#tA)"/>
 <path d="M22 13 C26 8 32 5 38 5 C44 5 48 7 50 8 L50 13 Z" fill="#3d515b"/>
 <path d="M10 26 C12 23 20 22 26 22 C30 20 34 21 37 23 C37 27 34 29 28 30 L12 30 C10 29 10 28 10 26 Z" fill="#26405a"/>
 <rect y="32" width="50" height="6" fill="#4c5a60"/>
</svg>
<div class="a" style="left:557px;top:418px;width:70px;height:52px;background:#e2e4df"></div>
<svg class="a" style="left:565px;top:426px" width="54" height="36" viewBox="0 0 54 36">
 <defs><linearGradient id="tB" x1="0" y1="0" x2="0" y2="1"><stop offset="0" stop-color="#7a8ea0"/><stop offset="0.33" stop-color="#8497a6"/><stop offset="0.34" stop-color="#50708a"/><stop offset="0.66" stop-color="#6a8496"/><stop offset="0.7" stop-color="#8d8e88"/><stop offset="1" stop-color="#888983"/></linearGradient></defs>
 <rect width="54" height="36" fill="url(#tB)"/>
 <rect x="0" y="18" width="30" height="2" fill="#a9b8c4" opacity="0.6"/>
 <rect x="24.5" y="16" width="3" height="5" fill="#e2e2e2"/>
 <rect x="25" y="21" width="2" height="8" fill="#3d4656"/>
 <rect x="30" y="27" width="12" height="1.5" fill="#9a6a64" opacity="0.6"/>
</svg>

<!-- hover time + marker -->
<div class="a" style="left:504px;top:471px;font-size:12px;line-height:13px;color:#fff;white-space:nowrap">00:55:51</div>

<!-- progress -->
<div class="a" style="left:8.5px;top:486.8px;font-size:10.6px;line-height:12px;color:#fff;white-space:nowrap">00:43:30</div>
<div class="a" style="left:61px;top:489px;width:711px;height:6px;border-radius:3px;background:rgba(205,205,205,0.6)"></div>
<div class="a" style="left:61px;top:489px;width:538px;height:6px;border-radius:3px;background:linear-gradient(90deg,#2ec8f6,#2a9cf0 60%,#4b7ff0)"></div>
<div class="a" style="left:550px;top:473px;width:1px;height:23px;background:#fff"></div>
<div class="a" style="left:591px;top:485px;width:15px;height:15px;border-radius:50%;background:#fff"></div>
<div class="a" style="left:781px;top:486.5px;font-size:10.6px;line-height:12px;color:#fff;white-space:nowrap">01:21:13</div>

<!-- controls -->
<svg class="a" style="left:0;top:502px" width="836" height="46" viewBox="0 502 836 46">
 <path d="M21.5 516.5 V535.5 L36 526 Z" fill="#fff" stroke="#fff" stroke-width="5" stroke-linejoin="round"/>
 <rect x="75.5" y="518.5" width="2.8" height="14.5" rx="1" fill="#fff"/>
 <path d="M90.5 519 L81 525.8 L90.5 532.6 Z" fill="#fff" stroke="#fff" stroke-width="1.5" stroke-linejoin="round"/>
 <path d="M120 519 L129.5 525.8 L120 532.6 Z" fill="#fff" stroke="#fff" stroke-width="1.5" stroke-linejoin="round"/>
 <rect x="132" y="518.5" width="2.8" height="14.5" rx="1" fill="#fff"/>
 <g fill="#fff"><circle cx="660.5" cy="517.5" r="1.3"/><circle cx="660.5" cy="524" r="1.3"/><circle cx="660.5" cy="530.5" r="1.3"/></g>
 <path d="M664.5 517.5 H677 M664.5 524 H677 M664.5 530.5 H677" stroke="#fff" stroke-width="2" stroke-linecap="round"/>
 <path d="M711.5 516.2 H720.5 L725.2 524 L720.5 531.8 H711.5 L706.8 524 Z" fill="none" stroke="#fff" stroke-width="1.9" stroke-linejoin="round"/>
 <circle cx="716" cy="524" r="3.2" fill="none" stroke="#fff" stroke-width="1.9"/>
 <path d="M754.5 520.5 H758 L764 515.8 V532.2 L758 527.5 H754.5 Z" fill="none" stroke="#fff" stroke-width="1.9" stroke-linejoin="round"/>
 <path d="M767 520.5 Q769.5 524 767 527.5 M769.8 517.3 Q775 524 769.8 530.7" fill="none" stroke="#fff" stroke-width="1.9" stroke-linecap="round"/>
 <path d="M800.5 521 V518.5 Q800.5 516.5 802.5 516.5 H805 M811.5 516.5 H814 Q816 516.5 816 518.5 V521 M816 527.5 V530 Q816 532 814 532 H811.5 M805 532 H802.5 Q800.5 532 800.5 530 V527.5" fill="none" stroke="#fff" stroke-width="1.9" stroke-linecap="round"/>
</svg>
<div class="a" style="left:451px;top:517px;font-size:14px;line-height:16px;font-weight:normal;color:#f2f2f2;white-space:nowrap">倍速</div>
<div class="a" style="left:501px;top:517px;font-size:14px;line-height:16px;font-weight:normal;color:#f1d9b5;white-space:nowrap">超清</div>
<div class="a" style="left:552px;top:517px;font-size:14px;line-height:16px;font-weight:normal;color:#f2f2f2;white-space:nowrap">字幕</div>
<div class="a" style="left:603px;top:517px;font-size:14px;line-height:16px;font-weight:normal;color:#f2f2f2;white-space:nowrap">查找</div>
<div class="a" style="left:516px;top:505px;width:31px;height:13px;border-radius:6.5px;background:#3f2e2a;border:1px solid #6a5047;color:#ebcbb9;font-size:9px;line-height:11px;font-weight:bold;text-align:center;letter-spacing:-0.4px">SVIP</div>
<div class="a" style="left:618px;top:505px;width:31px;height:13px;border-radius:6.5px;background:#3f2e2a;border:1px solid #6a5047;color:#ebcbb9;font-size:9px;line-height:11px;font-weight:bold;text-align:center;letter-spacing:-0.4px">SVIP</div>

</body></html>
